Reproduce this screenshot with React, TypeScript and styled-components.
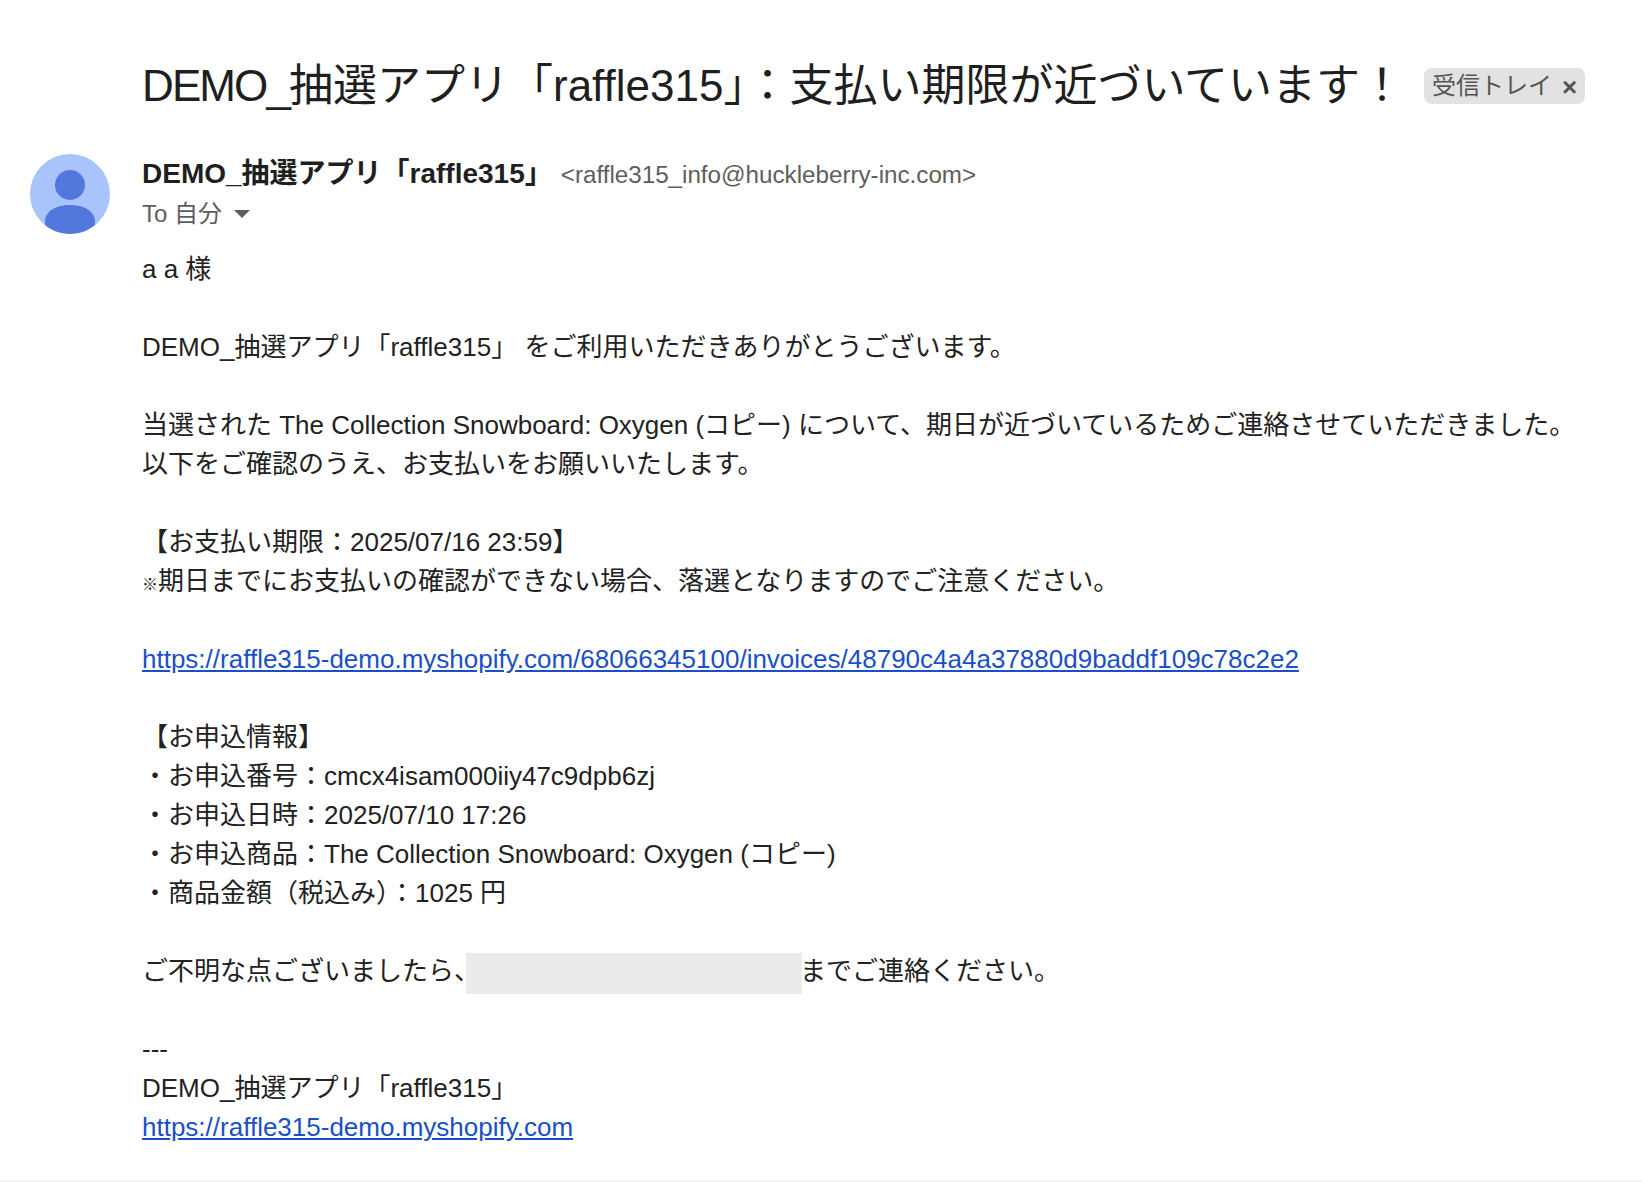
import React from 'react'
import styled, { createGlobalStyle } from 'styled-components'

const GlobalStyle = createGlobalStyle`
  html, body {
    margin: 0;
    padding: 0;
    background: #fff;
  }
  body {
    font-family: "Liberation Sans", "Noto Sans CJK JP", sans-serif;
    color: #222;
  }
`

const Page = styled.div`
  width: 1642px;
  height: 1182px;
  box-sizing: border-box;
  overflow: hidden;
  padding: 58px 0 0 30px;
  border-bottom: 2px solid #f6f6f6;
`

const TitleRow = styled.div`
  display: flex;
  align-items: center;
  height: 56px;
  padding-left: 112px;
`

const Title = styled.h1`
  margin: 0;
  font-size: 44px;
  line-height: 56px;
  font-weight: 400;
  color: #1f1f1f;
  white-space: nowrap;
`

const TitleLatin = styled.span`
  letter-spacing: -1.9px;
`

const Label = styled.span`
  display: inline-flex;
  align-items: center;
  height: 36px;
  box-sizing: border-box;
  margin-left: 20px;
  padding: 0 8px 6px;
  border-radius: 8px;
  background: #e2e2e2;
  color: #555;
  font-size: 24px;
  white-space: nowrap;
`

const LabelClose = styled.span`
  margin: 8px 0 0 10px;
  font-size: 26px;
  line-height: 24px;
  font-weight: 700;
`

const Message = styled.div`
  display: flex;
  margin-top: 40px;
`

const Avatar = styled.svg`
  flex: none;
  width: 80px;
  height: 80px;
  margin-right: 32px;
`

const Content = styled.div`
  flex: 1;
  min-width: 0;
`

const SenderRow = styled.div`
  display: flex;
  align-items: baseline;
  height: 40px;
  white-space: nowrap;
`

const SenderName = styled.strong`
  font-size: 28px;
  line-height: 40px;
  color: #1f1f1f;
`

const SenderAddress = styled.span`
  margin-left: 8px;
  font-size: 24.2px;
  color: #5e5e5e;
`

const ToRow = styled.div`
  display: flex;
  align-items: center;
  height: 40px;
  box-sizing: border-box;
  padding-bottom: 6px;
  font-size: 24px;
  color: #5e5e5e;
`

const Caret = styled.span`
  width: 0;
  height: 0;
  margin: 6px 0 0 12px;
  border-left: 8px solid transparent;
  border-right: 8px solid transparent;
  border-top: 8px solid #5e5e5e;
`

const Body = styled.div`
  margin-top: 16px;
  font-size: 26px;
  line-height: 39px;
  color: #222;
  white-space: nowrap;
`

const Line = styled.div<{ $gap?: boolean }>`
  height: 39px;
  margin-top: ${p => (p.$gap ? '39px' : '0')};
`

const NoteMark = styled.span`
  font-size: 16px;
`

const Link = styled.a`
  color: #1a4fc9;
  text-decoration: underline;
`

const Redacted = styled.span`
  display: inline-block;
  width: 336px;
  height: 41px;
  margin: -2px -2px -2px -14px;
  vertical-align: middle;
  background: #ebebeb;
`

const App: React.FC = () => (
  <Page>
    <GlobalStyle />
    <TitleRow>
      <Title>
        <TitleLatin>DEMO_</TitleLatin>抽選アプリ「raffle315」：支払い期限が近づいています！
      </Title>
      <Label>
        受信トレイ<LabelClose>×</LabelClose>
      </Label>
    </TitleRow>
    <Message>
      <Avatar viewBox="0 0 80 80">
        <defs>
          <clipPath id="avatarClip">
            <circle cx="40" cy="40" r="40" />
          </clipPath>
        </defs>
        <circle cx="40" cy="40" r="40" fill="#a8c4fb" />
        <g clipPath="url(#avatarClip)" fill="#5278de">
          <circle cx="40" cy="31" r="15" />
          <path d="M15 80V68c0-11 11-17 25-17s25 6 25 17v12z" />
        </g>
      </Avatar>
      <Content>
        <SenderRow>
          <SenderName>DEMO_抽選アプリ「raffle315」</SenderName>
          <SenderAddress>&lt;raffle315_info@huckleberry-inc.com&gt;</SenderAddress>
        </SenderRow>
        <ToRow>
          To 自分<Caret />
        </ToRow>
        <Body>
          <Line>a a 様</Line>
          <Line $gap>DEMO_抽選アプリ「raffle315」 をご利用いただきありがとうございます。</Line>
          <Line $gap>当選された The Collection Snowboard: Oxygen (コピー) について、期日が近づいているためご連絡させていただきました。</Line>
          <Line>以下をご確認のうえ、お支払いをお願いいたします。</Line>
          <Line $gap>【お支払い期限：2025/07/16 23:59】</Line>
          <Line>
            <NoteMark>※</NoteMark>期日までにお支払いの確認ができない場合、落選となりますのでご注意ください。
          </Line>
          <Line $gap>
            <Link href="#">https://raffle315-demo.myshopify.com/68066345100/invoices/48790c4a4a37880d9baddf109c78c2e2</Link>
          </Line>
          <Line $gap>【お申込情報】</Line>
          <Line>・お申込番号：cmcx4isam000iiy47c9dpb6zj</Line>
          <Line>・お申込日時：2025/07/10 17:26</Line>
          <Line>・お申込商品：The Collection Snowboard: Oxygen (コピー)</Line>
          <Line>・商品金額（税込み）：1025 円</Line>
          <Line $gap>
            ご不明な点ございましたら、<Redacted />までご連絡ください。
          </Line>
          <Line $gap>---</Line>
          <Line>DEMO_抽選アプリ「raffle315」</Line>
          <Line>
            <Link href="#">https://raffle315-demo.myshopify.com</Link>
          </Line>
        </Body>
      </Content>
    </Message>
  </Page>
)

export default App
